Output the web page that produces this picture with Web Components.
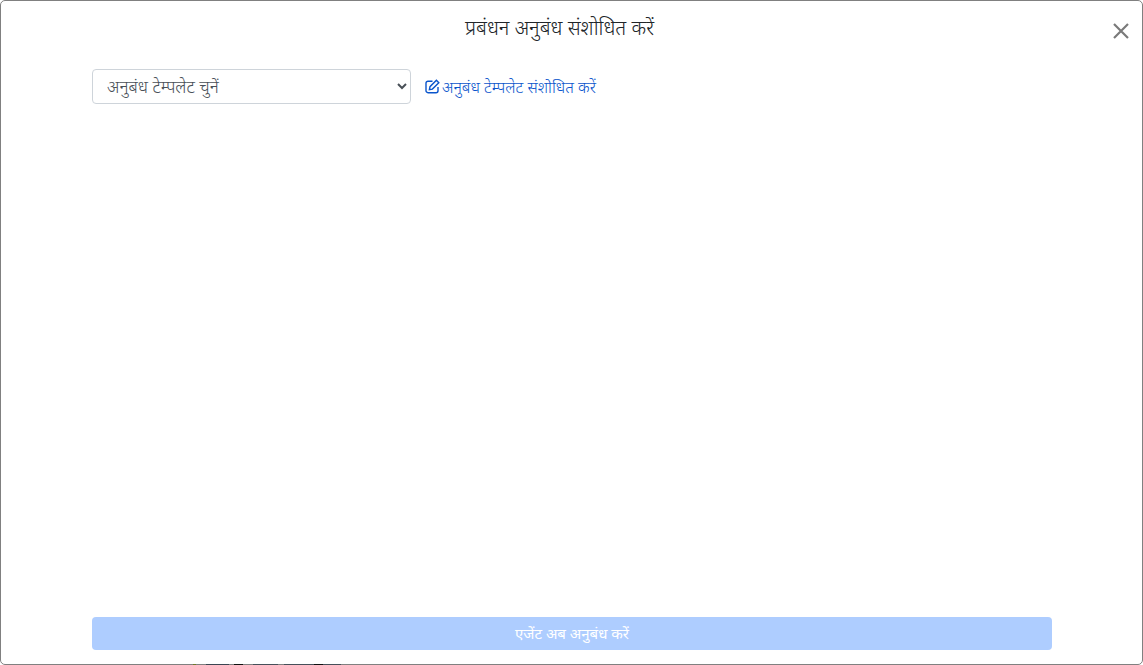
<!DOCTYPE html>
<html lang="hi"><head><meta charset="utf-8">
<style>
html,body{margin:0;padding:0;height:665px;overflow:hidden;background:#fff;font-family:"Noto Sans","Liberation Sans",sans-serif}
</style></head><body>
<contract-modal heading="प्रबंधन अनुबंध संशोधित करें">
  <template-picker placeholder="अनुबंध टेम्पलेट चुनें" link="अनुबंध टेम्पलेट संशोधित करें"></template-picker>
  <submit-button slot="footer">एजेंट अब अनुबंध करें</submit-button>
</contract-modal>
<script>
class ContractModal extends HTMLElement{
  constructor(){super();const s=this.attachShadow({mode:'open'});
  s.innerHTML=`<style>
  :host{display:flex;flex-direction:column;box-sizing:border-box;height:665px;background:#fff;border:1px solid #808080;border-radius:5px;color:#212529;position:relative}
  header{display:flex;align-items:flex-start;height:68px;box-sizing:border-box;position:relative;justify-content:center;padding:12px 24px 0 0}
  h1{margin:0;font-size:20.2px;font-weight:300;line-height:28px}
  button{position:absolute;right:11px;top:20px;width:20px;height:20px;border:0;background:none;padding:0;display:flex;color:#7a7a7a}
  main{flex:1;padding:0 90px 0 91px}
  footer{padding:0 90px 14px 91px}
  .peek{position:absolute;left:192px;bottom:-1px;width:150px;height:1px;background:
    linear-gradient(90deg,#6f7a2a 0 3px,transparent 3px 13px,#3b4652 13px 36px,transparent 36px 41px,#111 41px 50px,transparent 50px 60px,#46505a 60px 85px,transparent 85px 91px,#46505a 91px 121px,#111 121px 130px,#46505a 130px 148px,transparent 148px)}
  </style>
  <header><h1></h1><button aria-label="close"><svg width="20" height="20" viewBox="0 0 20 20"><path d="M3 3l14 14M17 3L3 17" stroke="currentColor" stroke-width="2.2" fill="none"/></svg></button></header>
  <main><slot></slot></main><footer><slot name="footer"></slot></footer><span class="peek" aria-hidden="true"></span>`;
  s.querySelector('h1').textContent=this.getAttribute('heading');}
}
class TemplatePicker extends HTMLElement{
  constructor(){super();const s=this.attachShadow({mode:'open'});
  s.innerHTML=`<style>
  :host{display:flex;align-items:center;gap:14px}
  select{width:319px;height:35px;box-sizing:border-box;background:#fff;border:1px solid #ced4da;border-radius:4px;color:#495057;font:300 17.3px "Noto Sans","Liberation Sans",sans-serif;padding:0 8px 0 10px}
  a{display:flex;align-items:center;gap:3px;color:#0a55cc;font-size:16px;font-weight:350;text-decoration:none}
  span{margin-left:-1px}
  svg{display:block}
  </style>
  <select><option></option></select>
  <a href="#"><svg width="15" height="15" viewBox="0 0 15 15" fill="none" stroke="currentColor" stroke-width="1.4"><path d="M13 8v3.7a2 2 0 0 1-2 2H3a2 2 0 0 1-2-2V4.2a2 2 0 0 1 2-2h4.5"/><path d="M11.4 1.3l2.4 2.4-6.4 6.4-3 .6.6-3z"/></svg><span></span></a>`;
  s.querySelector('option').textContent=this.getAttribute('placeholder');
  s.querySelector('span').textContent=this.getAttribute('link');}
}
class SubmitButton extends HTMLElement{
  constructor(){super();const s=this.attachShadow({mode:'open'});
  s.innerHTML=`<style>
  :host{display:flex;align-items:center;justify-content:center;height:33px;box-sizing:border-box;padding-bottom:2px;background:#aecdff;border-radius:4px;color:#fff;font-size:15px;font-weight:400}
  </style><slot></slot>`;}
}
customElements.define('contract-modal',ContractModal);
customElements.define('template-picker',TemplatePicker);
customElements.define('submit-button',SubmitButton);
</script></body></html>
